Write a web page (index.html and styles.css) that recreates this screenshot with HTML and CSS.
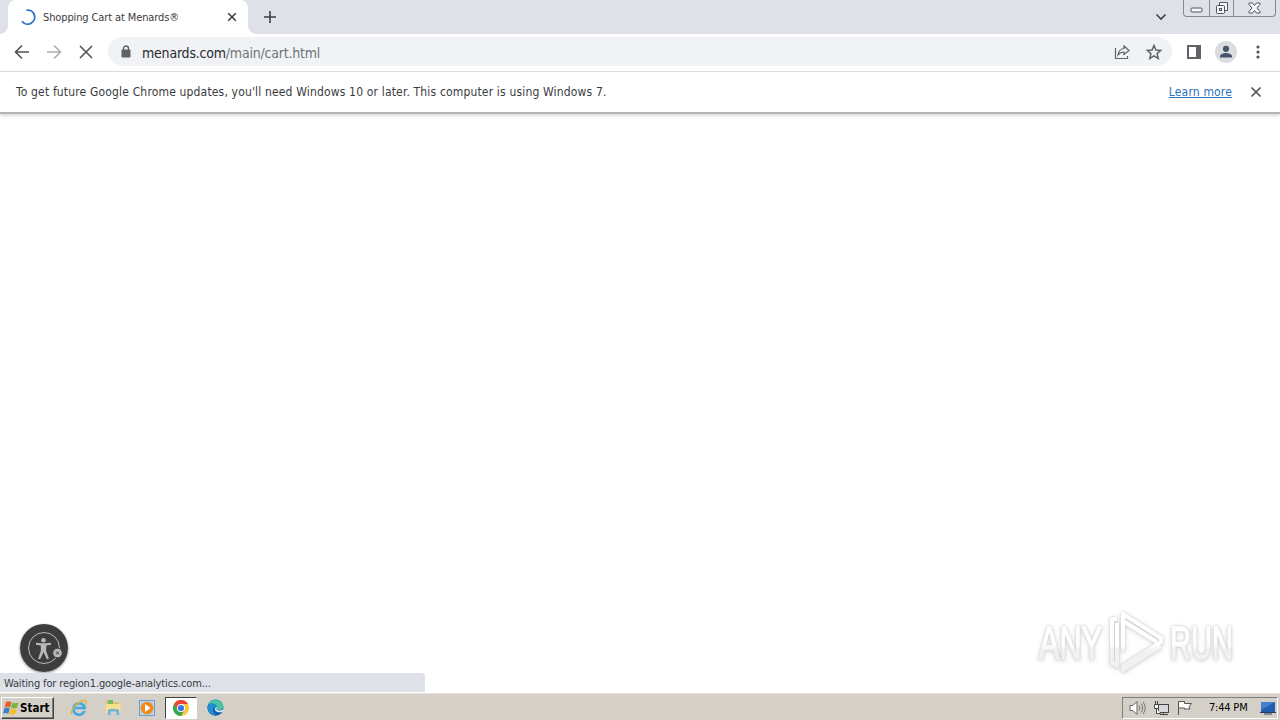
FILE: index.html
```html
<!DOCTYPE html>
<html lang="en">
<head>
    <meta charset="UTF-8">
    <title>Shopping Cart at Menards®</title>

    <link rel="stylesheet" href="styles.css">
</head>

<body>
<div class="tabstrip">
    <div class="tab">
        <svg class="spinner" width="16" height="16" viewBox="0 0 16 16"><path d="M6.500 1.200A7 7 0 1 1 2 12.200"/></svg>
        <span class="tab-title">Shopping Cart at Menards®</span>
        <svg class="tab-close" width="10" height="10" viewBox="0 0 10 10"><path d="M1.200 1.200l7.600 7.600M8.800 1.200L1.200 8.800"/></svg>
    </div>
    <svg class="new-tab" width="12" height="12" viewBox="0 0 12 12"><path d="M6 0v12M0 6h12"/></svg>
    <svg class="tab-search" width="12" height="8" viewBox="0 0 12 8"><path d="M1.500 1.500L6 6l4.500-4.500"/></svg>
    <div class="window-buttons">
        <div class="wb"><svg width="13" height="6" viewBox="0 0 13 6"><rect x="1" y="1" width="11" height="4" rx="1"/></svg></div>
        <div class="wb wb-restore"><svg width="14" height="14" viewBox="0 0 14 14"><path d="M4.500 4V1.500h8v8H10"/><rect x="1.500" y="4.500" width="8" height="8" rx="1"/><rect x="4.500" y="7.500" width="2" height="2"/></svg></div>
        <div class="wb wb-close"><svg width="13" height="12" viewBox="0 0 13 12"><path d="M1 1h3.500l2 2.500 2-2.500H12v1.500L9 6l3 3.500V11H8.500l-2-2.500-2 2.500H1V9.500L4 6 1 2.500z"/></svg></div>
    </div>
</div>

<div class="toolbar">
    <svg class="nav-icon" width="16" height="16" viewBox="0 0 16 16"><path d="M15 8H2M8 1.500L1.500 8 8 14.500"/></svg>
    <svg class="nav-icon forward" width="16" height="16" viewBox="0 0 16 16"><path d="M1 8h13M8 1.500L14.500 8 8 14.500"/></svg>
    <svg class="nav-icon" width="16" height="16" viewBox="0 0 16 16"><path d="M2 2l12 12M14 2L2 14"/></svg>
    <div class="omnibox">
        <svg class="lock" width="10" height="13" viewBox="0 0 10 13"><path d="M2.500 6V3.500a2.500 2.500 0 0 1 5 0V6" fill="none" stroke="#5f6368" stroke-width="1.400"/><rect x=".5" y="4.500" width="9" height="8" rx="1" fill="#5f6368"/></svg>
        <span class="url"><b>menards.com</b>/main/cart.html</span>
        <svg class="share" width="16" height="16" viewBox="0 0 16 16"><path d="M1.500 4v10.500h12V12M10 2l5 4.500-5 4V8c-3 0-4.500 1-6 3 .4-3.600 2.300-6 6-6.500z"/></svg>
        <svg class="star" width="16" height="16" viewBox="0 0 16 16"><path d="M8 1.500l1.900 4.500 4.900.4-3.700 3.200 1.100 4.800L8 11.800l-4.200 2.600 1.100-4.800L1.200 6.400 6.100 6z"/></svg>
    </div>
    <svg class="panel" width="14" height="14" viewBox="0 0 14 14"><path d="M1 1h12v12H1z" fill="none" stroke="#5f6368" stroke-width="2"/><path d="M9 1h4v12H9z" fill="#5f6368"/></svg>
    <svg class="avatar" width="22" height="22" viewBox="0 0 22 22"><circle cx="11" cy="11" r="11" fill="#dadce0"/><circle cx="11" cy="7.800" r="3.100" fill="#47536c"/><path d="M5 16.500v-1.200c0-2 3.500-3.300 6-3.300s6 1.300 6 3.300v1.200z" fill="#47536c"/></svg>
    <svg class="menu" width="4" height="14" viewBox="0 0 4 14"><circle cx="2" cy="2" r="1.600"/><circle cx="2" cy="7" r="1.600"/><circle cx="2" cy="12" r="1.600"/></svg>
</div>

<div class="infobar">
    <span class="info-text">To get future Google Chrome updates, you'll need Windows 10 or later. This computer is using Windows 7.</span>
    <a class="learn" href="#">Learn more</a>
    <svg class="info-close" width="12" height="12" viewBox="0 0 12 12"><path d="M1.500 1.500l9 9M10.500 1.500l-9 9"/></svg>
</div>

<div class="page">
    <svg class="watermark" width="248" height="72" viewBox="0 0 248 72">
        <defs>
            <linearGradient id="shade" x1="0" y1="0" x2="0" y2="72" gradientUnits="userSpaceOnUse">
                <stop offset="0.52" stop-color="#fff"/>
                <stop offset="0.6" stop-color="#f1f1f1"/>
            </linearGradient>
        </defs>
        <g class="mark-text">
            <text x="7" y="52" textLength="63" lengthAdjust="spacingAndGlyphs">ANY</text>
            <text x="138" y="52" textLength="63" lengthAdjust="spacingAndGlyphs">RUN</text>
        </g>
        <g class="mark-logo">
            <path d="M91 44V7l38 24v4L91 59v4l38-24" stroke="url(#shade)"/>
            <path d="M85 12h-5v44l5 3V16M91 14l34 21" stroke="url(#shade)"/>
        </g>
    </svg>

    <div class="accessibility">
        <svg width="48" height="48" viewBox="0 0 48 48">
            <circle cx="24" cy="24" r="24" fill="#3d3d3f"/>
            <circle cx="24" cy="24" r="15.500" fill="none" stroke="#b9b9b9"/>
            <circle cx="23.500" cy="16.300" r="2.300" fill="#b9b9b9"/>
            <path d="M16 18.700l5.500.6h4l5.500-.6v2l-4.800.8v5.500l2.700 7.700-2 .6-3.400-7-3.400 7-2-.6 2.700-7.700v-5.500l-4.800-.8z" fill="#b9b9b9"/>
            <circle cx="37.500" cy="29" r="4.800" fill="#b9b9b9" stroke="#3d3d3f"/>
            <path d="M36 27.500l3 3M39 27.500l-3 3" stroke="#3d3d3f"/>
        </svg>
    </div>
    <div class="status">Waiting for region1.google-analytics.com...</div>
</div>

<div class="taskbar">
    <div class="start">
        <svg width="17" height="16" viewBox="0 0 17 16">
            <path d="M3 2c2-1.200 3.500-1 5.500.2L7 7.500C5 6.500 3.500 6.500 1.500 7.300z" fill="#e8602c"/>
            <path d="M9.300 2.600c2 1 3.800 1 6.200 0L14 7.800c-2 1-4 .9-6 0z" fill="#76b83f"/>
            <path d="M1.300 8.200c2-.9 3.600-.8 5.500.2l-1.500 5.300c-2-1.100-3.500-1-5.300-.2z" fill="#3e7fd0"/>
            <path d="M7.600 8.800c2 1 4 1 6.200 0L12.300 14c-2.200 1-4.200 1-6.200 0z" fill="#f5bd2d"/>
        </svg>
        <span>Start</span>
    </div>
    <div class="launcher">
        <svg width="18" height="18" viewBox="0 0 18 18">
            <path d="M14.500 11.800A5.700 5.700 0 1 1 14.700 9H5" fill="none" stroke="#42a9e5" stroke-width="2.700"/>
            <path d="M2 15.500C-1 12 8 2 14 1.500c3-.2 2.500 2.500 1.500 4" fill="none" stroke="#e5b635" stroke-width="1.400"/>
        </svg>
    </div>
    <div class="launcher">
        <svg width="17" height="17" viewBox="0 0 17 17">
            <path d="M1 2h5l1 1.500h7V13H1z" fill="#e3bd58"/>
            <path d="M3 1h5v4H3z" fill="#73bd67"/>
            <path d="M1 5h14.500v8H1z" fill="#f5df8c"/>
            <path d="M3 16v-5c0-1.500 11-1.500 11 0v5h-2.500v-3.500h-6V16z" fill="#6bb3dc"/>
        </svg>
    </div>
    <div class="launcher">
        <svg width="16" height="16" viewBox="0 0 16 16">
            <rect x=".5" y=".5" width="15" height="15" fill="#b9d4ec" stroke="#6e9dc8"/>
            <circle cx="8" cy="8" r="6.300" fill="#f28a18"/>
            <path d="M6 4l5.500 4L6 12z" fill="#fff"/>
        </svg>
    </div>
    <div class="launcher active">
        <svg width="16" height="16" viewBox="0 0 16 16">
            <circle cx="8" cy="8" r="8" fill="#fcc934"/>
            <path d="M1.070 4A8 8 0 0 1 14.930 4H8L4.540 10z" fill="#ea4335"/>
            <path d="M1.070 4A8 8 0 0 0 8 16l3.460-6H4.540z" fill="#34a853"/>
            <circle cx="8" cy="8" r="4" fill="#fff"/><circle cx="8" cy="8" r="3.100" fill="#3578e5"/>
        </svg>
    </div>
    <div class="launcher">
        <svg width="17" height="17" viewBox="0 0 17 17">
            <circle cx="8.500" cy="8.500" r="8" fill="#167dcc"/>
            <path d="M1 6C3 0 12-1 15.500 5c2 4-1 6.500-4.500 6-2-.3-1-1.200-1-2.500C10 5 4 3 1 6z" fill="#4bc5a0"/>
            <path d="M1 6c4-2 8-.5 9 2-4-1-5 5 5.500 4.700C11 19 1 17 .6 9z" fill="#145ba8"/>
            <path d="M.6 7C4 3 9 4 10 8c-2-1-4 0-4 3 0 2 1 4 3 5.400C4 17 0 12 .6 7z" fill="#218ed7"/>
            <path d="M10 8c0 2-1.500 2 0 3 2 1 5 .8 6.500-1l-1 3c-5 1.300-9-1-7-4.500z" fill="#d9eef4"/>
        </svg>
    </div>
    <div class="tray">
        <svg class="speaker" width="17" height="16" viewBox="0 0 17 16"><path d="M1 5.500h3l4-4v13l-4-4H1z" fill="#fff" stroke="#666"/><path d="M10 5.500q1.800 2.500 0 5M12 3.500q3.500 4.500 0 9M14 2q4.500 6 0 12" fill="none" stroke="#777"/></svg>
        <svg class="network" width="17" height="16" viewBox="0 0 17 16"><rect x="5.500" y="4.500" width="10" height="8" fill="#d8d8d8" stroke="#444"/><path d="M7 14.500h8M10.500 12.500v2" stroke="#444"/><path d="M1.500 4.500h4v4h-4zM2.500 1v3.500M4.500 1v3.500M3.500 8.500v5h4" fill="#fff" stroke="#444"/></svg>
        <svg class="flag" width="16" height="16" viewBox="0 0 16 16"><path d="M1.500 15V1.500h6v2h7l-2.500 3 1 2.500H7.500V8h-6" fill="#fff" stroke="#555"/></svg>
        <span class="clock">7:44 PM</span>
        <svg class="desktop" width="16" height="14" viewBox="0 0 16 14"><path d="M1 1h14v10H1z" fill="#245eae"/><path d="M1 1h14L1 9z" fill="#477fd0"/><path d="M0 11.500h16M4 13h8" stroke="#263d67"/></svg>
    </div>
</div>
</body>
</html>
```

FILE: styles.css
```css
* {
    box-sizing: border-box;
}

body {
    margin: 0;
    width: 1280px;
    height: 720px;
    overflow: hidden;
    display: flex;
    flex-direction: column;
    background-color: #fff;
    font-family: "DejaVu Sans Condensed", "DejaVu Sans", sans-serif;
    font-stretch: condensed;
    color: #3a3b3e;
}

svg {
    display: block;
    flex: none;
}

span, a {
    white-space: nowrap;
}

.tabstrip {
    height: 34px;
    flex: none;
    display: flex;
    align-items: center;
    padding-left: 8px;
    background-color: #dee1e8;
}

.tab {
    position: relative;
    width: 240px;
    height: 34px;
    display: flex;
    align-items: center;
    padding: 0 11px 0 12px;
    border-radius: 8px 8px 0 0;
    background-color: #fff;
}

.tab::before, .tab::after {
    content: "";
    position: absolute;
    bottom: 0;
    width: 8px;
    height: 8px;
}

.tab::before {
    left: -8px;
    background: radial-gradient(circle at 0 0, transparent 7.5px, #fff 8px);
}

.tab::after {
    right: -8px;
    background: radial-gradient(circle at 100% 0, transparent 7.5px, #fff 8px);
}

.spinner path {
    fill: none;
    stroke: #2b73c8;
    stroke-width: 1.8;
}

.tab-title {
    margin-left: 7px;
    font-size: 11px;
    letter-spacing: -0.12px;
}

.tab-close {
    margin-left: auto;
}

.tab-close path, .new-tab path, .tab-search path {
    fill: none;
    stroke: #3c4043;
    stroke-width: 1.6;
}

.new-tab {
    margin-left: 16px;
}

.tab-search {
    margin-left: auto;
}

.window-buttons {
    align-self: flex-start;
    display: flex;
    width: 93px;
    height: 17px;
    margin: 0 4px 0 16px;
    border: 1px solid #85888e;
    border-top: none;
    border-radius: 0 0 4px 4px;
}

.wb {
    width: 25px;
    display: flex;
    align-items: center;
    justify-content: center;
    padding-top: 4px;
}

.wb-restore {
    border-left: 1px solid #85888e;
    border-right: 1px solid #85888e;
    padding-top: 0;
}

.wb-close {
    width: 41px;
    padding-top: 0;
}

.wb svg * {
    fill: #f6f6f8;
    stroke: #50555e;
}

.toolbar {
    height: 38px;
    flex: none;
    display: flex;
    align-items: center;
    padding: 0 20px 2px 14px;
    border-bottom: 1px solid #d9dbde;
}

.nav-icon {
    margin-right: 16px;
}

.nav-icon path {
    fill: none;
    stroke: #505357;
    stroke-width: 1.6;
}

.toolbar .forward path {
    stroke: #aaadaf;
}

.omnibox {
    width: 1064px;
    height: 29px;
    margin-left: -2px;
    padding: 0 10px 0 13px;
    display: flex;
    align-items: center;
    border-radius: 15px;
    background-color: #f0f2f5;
}

.url {
    margin-left: 11px;
    padding-top: 2px;
    font-size: 14px;
    color: #707479;
    letter-spacing: -0.21px;
}

.url b {
    font-weight: normal;
    color: #2a2b2e;
}

.share {
    margin-left: auto;
    margin-right: 16px;
}

.share path, .star path {
    fill: none;
    stroke: #5f6368;
    stroke-width: 1.2;
}

.omnibox .star path {
    stroke-width: 1.5;
}

.panel {
    margin-left: 15px;
}

.avatar {
    margin-left: 14px;
}

.menu {
    margin-left: auto;
    fill: #505357;
}

.infobar {
    height: 42px;
    flex: none;
    display: flex;
    align-items: center;
    padding: 0 18px 0 16px;
    border-bottom: 2px solid #b4b4b4;
    box-shadow: 0 2px 3px #ddd;
    font-size: 12px;
    letter-spacing: 0.165px;
}

.learn {
    margin-left: auto;
    margin-right: 18px;
    color: #2a72bb;
}

.info-close path {
    stroke: #505357;
    stroke-width: 1.7;
}

.page {
    position: relative;
    flex: 1;
}

.watermark {
    position: absolute;
    left: 1032px;
    top: 493px;
    filter: drop-shadow(0 0 1px #ccc) drop-shadow(0 1px 2px #ddd);
}

.mark-text {
    font-family: "Liberation Sans Narrow", "Liberation Sans", sans-serif;
    font-size: 46px;
    fill: url(#shade);
    stroke: url(#shade);
    stroke-width: 1.5px;
}

.mark-logo path {
    fill: none;
    stroke-width: 4;
    stroke-linejoin: round;
}

.accessibility {
    position: absolute;
    left: 20px;
    bottom: 21px;
    border-radius: 50%;
    box-shadow: 0 1px 3px #999;
}

.status {
    position: absolute;
    left: 0;
    bottom: 1px;
    width: 425px;
    height: 19px;
    padding: 0 4px;
    border-radius: 0 4px 0 0;
    background-color: #dee1e8;
    font-size: 11px;
    letter-spacing: -0.14px;
    line-height: 22px;
}

.taskbar {
    height: 27px;
    flex: none;
    display: flex;
    align-items: center;
    padding: 1px 2px 0 1px;
    border-top: 1px solid #e5e2dc;
    background-color: #d4d0c8;
}

.start {
    width: 53px;
    height: 22px;
    margin-right: 9px;
    padding-left: 1px;
    display: flex;
    align-items: center;
    border: 1px solid #fff;
    border-right-color: #404040;
    border-bottom-color: #404040;
    box-shadow: inset -1px -1px #808080;
    font-size: 11.5px;
    font-weight: bold;
    color: #000;
}

.launcher {
    width: 32px;
    height: 22px;
    margin-right: 2px;
    display: flex;
    align-items: center;
    justify-content: center;
}

.active {
    border: 1px solid #404040;
    border-right-color: #fff;
    border-bottom-color: #fff;
    background-color: #fff;
}

.tray {
    width: 156px;
    height: 22px;
    margin-left: auto;
    padding-left: 6px;
    display: flex;
    align-items: center;
    border: 1px solid #808080;
    border-right-color: #fff;
    border-bottom-color: #fff;
}

.network, .flag {
    margin-left: 7px;
}

.clock {
    margin-left: 16px;
    font-size: 11px;
    letter-spacing: -0.2px;
    color: #000;
}

.desktop {
    margin-left: auto;
    margin-right: 1px;
}
```
